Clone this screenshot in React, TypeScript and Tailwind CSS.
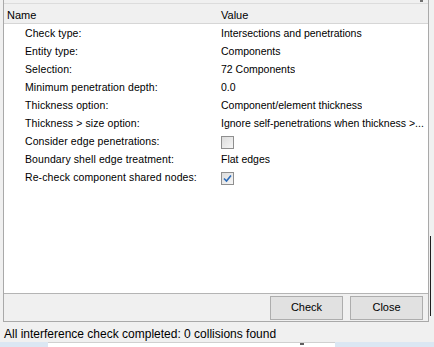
import React from 'react';

const rows: { name: string; value: string | boolean }[] = [
  { name: 'Check type:', value: 'Intersections and penetrations' },
  { name: 'Entity type:', value: 'Components' },
  { name: 'Selection:', value: '72 Components' },
  { name: 'Minimum penetration depth:', value: '0.0' },
  { name: 'Thickness option:', value: 'Component/element thickness' },
  { name: 'Thickness > size option:', value: 'Ignore self-penetrations when thickness >...' },
  { name: 'Consider edge penetrations:', value: false },
  { name: 'Boundary shell edge treatment:', value: 'Flat edges' },
  { name: 'Re-check component shared nodes:', value: true },
];

const CheckBox: React.FC<{ checked: boolean }> = ({ checked }) => (
  <div className="w-[13px] h-[13px] border border-[#8f8f8f] bg-gradient-to-br from-[#dcdcdc] to-[#f6f6f6] flex items-center justify-center">
    {checked && (
      <svg width="9" height="9" viewBox="0 0 9 9">
        <path d="M1 4.5 L3.5 7 L8 1.5" fill="none" stroke="#2a6ab8" strokeWidth="1.6" />
      </svg>
    )}
  </div>
);

export default function App() {
  return (
    <div
      className="w-[434px] h-[347px] bg-[#f0f0f0] relative overflow-hidden text-[10.5px] text-black"
      style={{ fontFamily: '"Liberation Sans", Arial, sans-serif' }}
    >
      {/* splitter mark */}
      <div className="absolute left-[420px] top-0 w-[3px] h-[2px] bg-[#707070]" />
      {/* window edge */}
      <div className="absolute left-[430px] top-[236px] w-[1px] h-[80px] bg-[#202020]" />

      <div className="flex flex-col h-[322px] ml-[3px] w-[426px] border-l border-r border-b border-[#a9a9a9] pt-[3px]">
        {/* header */}
        <div className="flex h-[21px] items-center pt-[4px] bg-[#f0f0f0] border-b border-[#d6d6d6] border-t border-t-[#dcdcdc] text-[11px]">
          <div className="w-[216px] shrink-0 pl-[3px]">Name</div>
          <div className="pl-[1px]">Value</div>
        </div>

        {/* property list */}
        <div className="flex-1 bg-white border-b border-[#b4b4b4] pt-[1px]">
          {rows.map((r) => (
            <div key={r.name} className="flex h-[18px] items-center">
              <div className="w-[216px] shrink-0 pl-[21px] whitespace-nowrap tracking-[0.1px]">{r.name}</div>
              <div className="pl-[1px] whitespace-nowrap overflow-hidden">
                {typeof r.value === 'boolean' ? <CheckBox checked={r.value} /> : r.value}
              </div>
            </div>
          ))}
        </div>

        {/* buttons */}
        <div className="h-[27px] flex items-center justify-end gap-[7px] pr-[5px] text-[11px]">
          <button className="w-[73px] h-[24px] border border-[#adadad] bg-[#e1e1e1]">Check</button>
          <button className="w-[73px] h-[24px] border border-[#adadad] bg-[#e1e1e1]">Close</button>
        </div>
      </div>

      {/* status */}
      <div className="h-[20px] flex items-center pl-[4px] pt-[3px] text-[12px]">
        All interference check completed: 0 collisions found
      </div>

      {/* bottom strip */}
      <div className="flex h-[5px]">
        <div className="w-[48px] bg-[#dbe7f3]" />
        <div className="w-[287px] bg-white border-t border-[#d0d0d0] relative">
          <div className="absolute left-[252px] top-0 w-[4px] h-[2px] bg-[#606060]" />
        </div>
        <div className="flex-1 bg-[#dbe7f3]" />
      </div>
    </div>
  );
}
